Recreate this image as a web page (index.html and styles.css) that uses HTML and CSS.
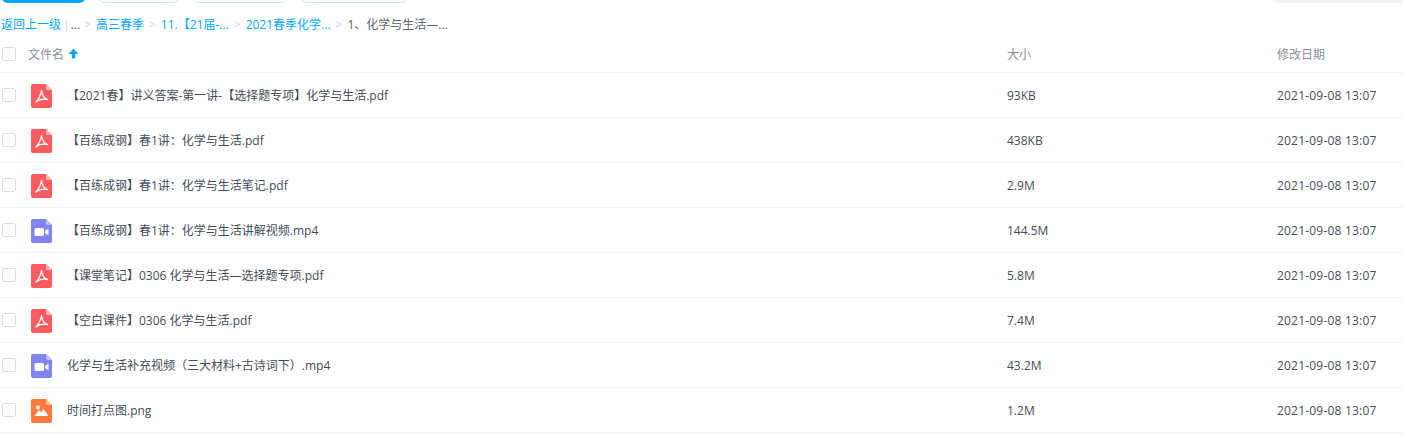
FILE: index.html
```html
<!DOCTYPE html>
<html>
	<head>
		<title>文件列表</title>
		<meta charset="UTF-8">
		<link rel="stylesheet" href="styles.css">
	</head>
	<body>
		<svg class="defs" width="0" height="0">
			<symbol id="ico-pdf" viewBox="0 0 21 24">
				<path d="M2 0H15L21 6V22a2 2 0 0 1-2 2H2a2 2 0 0 1-2-2V2a2 2 0 0 1 2-2z" fill="#ff5a5f"/>
				<path d="M15 0L21 6H16a1 1 0 0 1-1-1z" fill="#ffb3b5"/>
				<path d="M10.500 6.500C10 10 8.500 14 5 18C7 16 11 14.500 16.500 15.500C13.500 14.500 11 11 10.500 6.500z" fill="none" stroke="#fff" stroke-width="1.300" stroke-linejoin="round"/>
			</symbol>
			<symbol id="ico-video" viewBox="0 0 21 24">
				<path d="M2 0H15L21 6V22a2 2 0 0 1-2 2H2a2 2 0 0 1-2-2V2a2 2 0 0 1 2-2z" fill="#8183f1"/>
				<path d="M15 0L21 6H16a1 1 0 0 1-1-1z" fill="#c0c1f8"/>
				<rect x="3.500" y="9" width="9.500" height="8" rx="1.500" fill="#fff"/>
				<path d="M14 12L17.500 9.500V16.500L14 14z" fill="#fff"/>
			</symbol>
			<symbol id="ico-image" viewBox="0 0 21 24">
				<path d="M2 0H15L21 6V22a2 2 0 0 1-2 2H2a2 2 0 0 1-2-2V2a2 2 0 0 1 2-2z" fill="#ff7a3d"/>
				<path d="M15 0L21 6H16a1 1 0 0 1-1-1z" fill="#ffbd9e"/>
				<circle cx="7" cy="8.500" r="2" fill="#fff"/>
				<path d="M3.500 17L8 11L10 13.500L12.500 10L17.500 17z" fill="#fff"/>
			</symbol>
		</svg>

		<div class="toolbar">
			<div class="btn btn-main"></div>
			<div class="btn btn-a"></div>
			<div class="btn btn-b"></div>
			<div class="btn btn-c"></div>
			<div class="search"></div>
		</div>

		<div class="crumbs">
			<a>返回上一级</a><span class="pipe">|</span><span class="dots">...</span>
			<span class="sep">&gt;</span><a>高三春季</a>
			<span class="sep">&gt;</span><a>11.【21届-...</a>
			<span class="sep">&gt;</span><a>2021春季化学...</a>
			<span class="sep">&gt;</span><span class="current">1、化学与生活—...</span>
		</div>

		<div class="row head">
			<span class="check"></span>
			<span class="name">文件名<svg class="sort" width="11" height="11" viewBox="0 0 10 10"><path d="M5 0.500L9.500 5.500H6.500V9.500H3.500V5.500H0.500z" fill="#06a7ff"/></svg></span>
			<span class="size">大小</span>
			<span class="date">修改日期</span>
		</div>

		<div class="row">
			<span class="check"></span>
			<svg class="ico"><use href="#ico-pdf"/></svg>
			<span class="name">【2021春】讲义答案-第一讲-【选择题专项】化学与生活.pdf</span>
			<span class="size">93KB</span>
			<span class="date">2021-09-08 13:07</span>
		</div>
		<div class="row">
			<span class="check"></span>
			<svg class="ico"><use href="#ico-pdf"/></svg>
			<span class="name">【百练成钢】春1讲：化学与生活.pdf</span>
			<span class="size">438KB</span>
			<span class="date">2021-09-08 13:07</span>
		</div>
		<div class="row">
			<span class="check"></span>
			<svg class="ico"><use href="#ico-pdf"/></svg>
			<span class="name">【百练成钢】春1讲：化学与生活笔记.pdf</span>
			<span class="size">2.9M</span>
			<span class="date">2021-09-08 13:07</span>
		</div>
		<div class="row">
			<span class="check"></span>
			<svg class="ico"><use href="#ico-video"/></svg>
			<span class="name">【百练成钢】春1讲：化学与生活讲解视频.mp4</span>
			<span class="size">144.5M</span>
			<span class="date">2021-09-08 13:07</span>
		</div>
		<div class="row">
			<span class="check"></span>
			<svg class="ico"><use href="#ico-pdf"/></svg>
			<span class="name">【课堂笔记】0306 化学与生活—选择题专项.pdf</span>
			<span class="size">5.8M</span>
			<span class="date">2021-09-08 13:07</span>
		</div>
		<div class="row">
			<span class="check"></span>
			<svg class="ico"><use href="#ico-pdf"/></svg>
			<span class="name">【空白课件】0306 化学与生活.pdf</span>
			<span class="size">7.4M</span>
			<span class="date">2021-09-08 13:07</span>
		</div>
		<div class="row">
			<span class="check"></span>
			<svg class="ico"><use href="#ico-video"/></svg>
			<span class="name">化学与生活补充视频（三大材料+古诗词下）.mp4</span>
			<span class="size">43.2M</span>
			<span class="date">2021-09-08 13:07</span>
		</div>
		<div class="row">
			<span class="check"></span>
			<svg class="ico"><use href="#ico-image"/></svg>
			<span class="name">时间打点图.png</span>
			<span class="size">1.2M</span>
			<span class="date">2021-09-08 13:07</span>
		</div>
	</body>
</html>
```

FILE: styles.css
```css
* {
	box-sizing: border-box;
	margin: 0px;
	padding: 0px;
}

html, body {
	background: #fff;
	overflow: hidden;
}

body {
	font-family: "Open Sans", "Noto Sans CJK SC", sans-serif;
	font-size: 12px;
	color: #454d5a;
}

.defs { position: absolute; }

.toolbar {
	display: flex;
	align-items: flex-end;
	gap: 10px;
	height: 3px;
	overflow: hidden;
}

.btn {
	flex: none;
	height: 30px;
	border-radius: 0px 0px 8px 8px;
	border: 1px solid #c5eaff;
}

.btn-main {
	width: 87px;
	background: #06a7ff;
	border-color: #06a7ff;
}

.btn-a { width: 84px; }
.btn-b { width: 98px; }
.btn-c { width: 110px; }

.search {
	flex: none;
	width: 131px;
	height: 30px;
	margin-left: auto;
	border-radius: 0px 0px 0px 8px;
	background: #f3f3f4;
}

.crumbs {
	display: flex;
	align-items: center;
	height: 40px;
	padding: 2px 0px 0px 1px;
	white-space: pre;
}

.crumbs a { color: #06a7ff; }

.pipe { color: #c5d9ea; margin: 0px 1px 0px 2px; }

.dots { margin-right: -1px; }

.dots, .current { color: #5f6570; }

.sep {
	color: #c4d8f4;
	margin: 0px 5px;
}

.row {
	display: flex;
	align-items: center;
	height: 45px;
	border-bottom: 1px solid #f5f6f8;
}

.head {
	height: 30px;
	padding-bottom: 7px;
	color: #8a8f96;
}

.check {
	flex: none;
	width: 14px;
	height: 14px;
	margin-left: 2px;
	border: 1px solid #d8dde6;
	border-radius: 2px;
}

.ico {
	flex: none;
	width: 21px;
	height: 24px;
	margin: 2px 0px 0px 15px;
}

.name {
	flex: none;
	width: 940px;
	margin-left: 15px;
	white-space: pre;
}

.head .name {
	width: 979px;
	margin-left: 12px;
}

.sort { margin-left: 4px; }

.size {
	flex: none;
	width: 270px;
}

.date {
	flex: none;
	letter-spacing: 0.2px;
}

.head .date { letter-spacing: 0px; }
```
